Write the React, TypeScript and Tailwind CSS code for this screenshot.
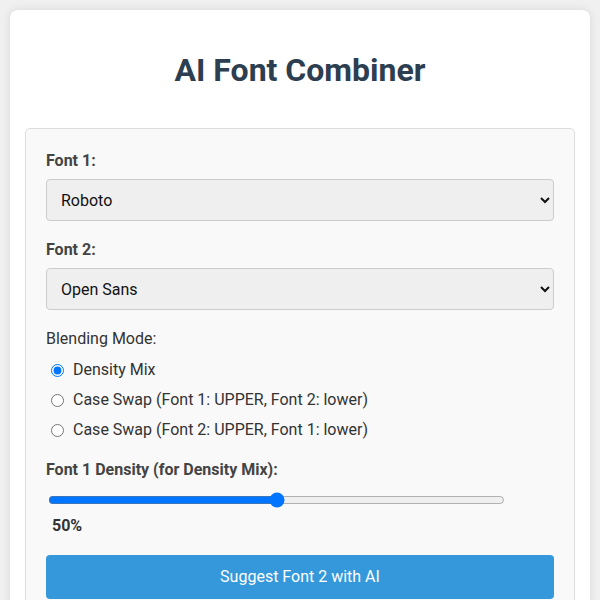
import { useState } from 'react';

const fonts = ['Roboto', 'Open Sans', 'Lato', 'Inter', 'Liberation Serif'];

const modes = [
  { id: 'density', label: 'Density Mix' },
  { id: 'swap1', label: 'Case Swap (Font 1: UPPER, Font 2: lower)' },
  { id: 'swap2', label: 'Case Swap (Font 2: UPPER, Font 1: lower)' },
];

export default function App() {
  const [font1, setFont1] = useState('Roboto');
  const [font2, setFont2] = useState('Open Sans');
  const [mode, setMode] = useState('density');
  const [density, setDensity] = useState(50);

  return (
    <div className="min-h-[600px] bg-[#f0f0f0] px-[10px] pt-[10px] font-['Roboto',sans-serif]">
      <div className="rounded-[8px] bg-white px-[15px] pt-[41px] shadow-[0_0_10px_rgba(0,0,0,0.1)]">
        <h1 className="mb-[39px] text-center text-[32px] font-bold leading-[38px] text-[#2c3e50]">
          AI Font Combiner
        </h1>

        <div className="rounded-[5px] border border-[#ddd] bg-[#f9f9f9] px-[20px] pt-[20px] pb-[20px]">
          <label className="mb-[6px] block text-[16px] font-bold leading-[24px] text-[#444]">Font 1:</label>
          <select
            value={font1}
            onChange={(e) => setFont1(e.target.value)}
            className="mb-[17px] block h-[42px] w-full rounded-[4px] border border-[#ccc] bg-[#efefef] px-[10px] text-[16px] text-[#111]"
          >
            {fonts.map((f) => (
              <option key={f}>{f}</option>
            ))}
          </select>

          <label className="mb-[6px] block text-[16px] font-bold leading-[24px] text-[#444]">Font 2:</label>
          <select
            value={font2}
            onChange={(e) => setFont2(e.target.value)}
            className="mb-[17px] block h-[42px] w-full rounded-[4px] border border-[#ccc] bg-[#efefef] px-[10px] text-[16px] text-[#111]"
          >
            {fonts.map((f) => (
              <option key={f}>{f}</option>
            ))}
          </select>

          <div className="mb-[7px] text-[16px] leading-[24px] text-[#333]">Blending Mode:</div>
          <div className="mb-[16px] flex flex-col gap-[6px]">
            {modes.map((m) => (
              <label key={m.id} className="flex items-center text-[16px] leading-[24px] text-[#333]">
                <input
                  type="radio"
                  name="mode"
                  checked={mode === m.id}
                  onChange={() => setMode(m.id)}
                  className="ml-[5px] mr-[9px] h-[13px] w-[13px]"
                />
                {m.label}
              </label>
            ))}
          </div>

          <label className="mb-[8px] block text-[16px] font-bold leading-[24px] text-[#444]">
            Font 1 Density (for Density Mix):
          </label>
          <input
            type="range"
            min={0}
            max={100}
            value={density}
            onChange={(e) => setDensity(Number(e.target.value))}
            className="ml-[2px] block h-[20px] w-[90%]"
          />
          <div className="mt-[4px] mb-[17px] pl-[6px] text-[16px] font-bold leading-[24px] text-[#333]">{density}%</div>

          <button className="block h-[44px] w-full rounded-[4px] bg-[#3498db] text-[16px] text-white">
            Suggest Font 2 with AI
          </button>
        </div>
      </div>
    </div>
  );
}
